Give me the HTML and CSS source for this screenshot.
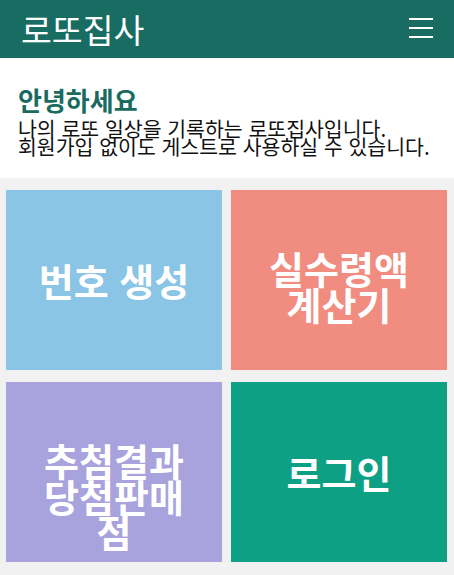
FILE: index.html
```html
<!DOCTYPE html>
<html lang="ko">
<head>
<meta charset="utf-8">
<title>로또집사</title>
<link rel="stylesheet" href="styles.css">
</head>
<body>
<header class="topbar">
  <h1 class="brand">로또집사</h1>
  <button class="menu-btn" aria-label="메뉴">
    <svg width="24" height="20" viewBox="0 0 24 20"><rect x="0" y="0" width="24" height="2" fill="#fff"/><rect x="0" y="9" width="24" height="2" fill="#fff"/><rect x="0" y="18" width="24" height="2" fill="#fff"/></svg>
  </button>
</header>
<section class="intro">
  <h2 class="intro-title">안녕하세요</h2>
  <p class="intro-text">나의 로또 일상을 기록하는 로또집사입니다.<br>회원가입 없이도 게스트로 사용하실 수 있습니다.</p>
</section>
<main class="tiles">
  <a class="tile tile-blue" href="#"><span class="tile-label"><span>번호 생성</span></span></a>
  <a class="tile tile-red" href="#"><span class="tile-label"><span>실수령액계산기</span></span></a>
  <a class="tile tile-purple" href="#"><span class="tile-label"><span>추첨결과당첨판매점</span></span></a>
  <a class="tile tile-green" href="#"><span class="tile-label"><span>로그인</span></span></a>
</main>
</body>
</html>
```
FILE: styles.css
```css
* { box-sizing: border-box; }
html, body { margin: 0; padding: 0; }
body {
  font-family: "Noto Sans CJK KR", "Noto Sans", sans-serif;
  background: #f1f1f1;
  width: 454px;
}
.topbar {
  height: 58px;
  background: #186c62;
  display: flex;
  align-items: center;
  justify-content: space-between;
  padding: 0 21px 0 21px;
}
.brand {
  margin: 0;
  font-size: 33.5px;
  font-weight: 400;
  line-height: 40px;
  color: #fff;
}
.menu-btn {
  background: none;
  border: 0;
  padding: 0;
  width: 24px;
  height: 20px;
  display: flex;
  margin-top: -2px;
}
.intro {
  background: #fff;
  height: 120px;
  padding: 28px 18px 0 18px;
}
.intro-title {
  margin: 0;
  font-size: 26px;
  font-weight: 700;
  line-height: 28px;
  color: #1a6b5f;
}
.intro-text {
  margin: 0;
  font-size: 20.5px;
  line-height: 18px;
  color: #111;
  padding-top: 5px;
}
.tiles {
  display: grid;
  grid-template-columns: 216px 216px;
  grid-auto-rows: 180px;
  column-gap: 9px;
  row-gap: 12px;
  padding: 12px 7px 12px 6px;
}
.tile {
  display: flex;
  align-items: center;
  justify-content: center;
  text-align: center;
  padding: 0 26px;
  color: #fff;
  text-decoration: none;
  font-size: 38px;
  font-weight: 700;
  line-height: 35.5px;
}
.tile-label {
  height: 60px;
  width: 100%;
  display: flex;
  flex-direction: column;
  justify-content: safe center;
}
.tile-blue { background: #8bc5e5; }
.tile-red { background: #f08c80; }
.tile-purple { background: #a8a2dd; }
.tile-green { background: #0ea084; }
```
